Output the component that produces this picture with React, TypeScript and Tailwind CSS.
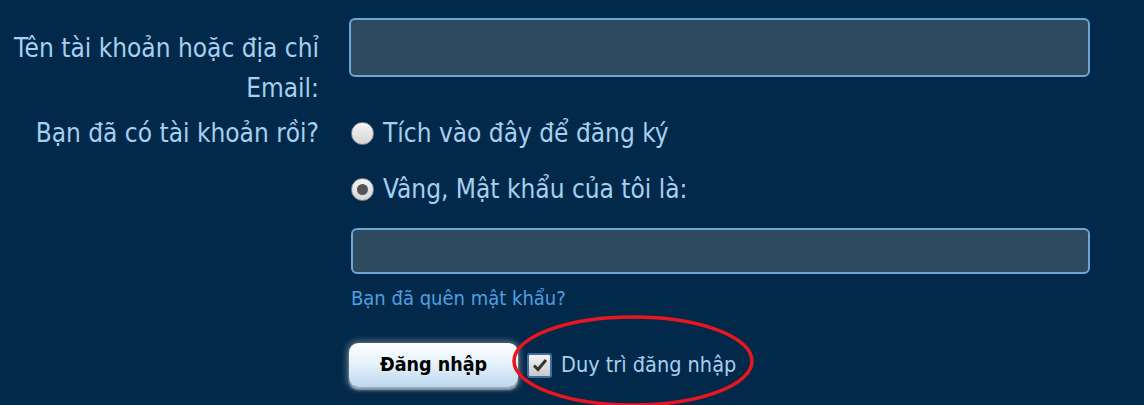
import React from 'react';

export default function App() {
  return (
    <div
      className="h-[405px] w-[1144px] overflow-hidden bg-[#03294a] text-[#a6d0ef]"
      style={{ fontFamily: '"DejaVu Sans Condensed", "DejaVu Sans", sans-serif' }}
    >
      <div className="relative pt-[18px]">
        {/* username */}
        <div className="flex">
          <label className="w-[319px] shrink-0 pt-[10px] text-right text-[26px] leading-[40px]">
            Tên tài khoản hoặc địa chỉ Email:
          </label>
          <div className="ml-[30px] w-[741px]">
            <input className="h-[59px] w-full rounded-[6px] border-2 border-[#6aa7d6] bg-[#2e4a5f] outline-none" />
          </div>
        </div>

        {/* password */}
        <div className="flex">
          <div className="w-[319px] shrink-0 pt-[5px] text-right text-[26px] leading-[40px]">Bạn đã có tài khoản rồi?</div>
          <div className="ml-[32px] w-[739px] pt-[5px]">
            <label className="flex h-[40px] items-center gap-[9px] text-[26px]">
              <span className="h-[23px] w-[23px] shrink-0 rounded-full border border-[#8c8c8c] bg-gradient-to-b from-[#f4f4f4] to-[#d6d6d6] shadow-[inset_0_1px_1px_#fff]" />
              Tích vào đây để đăng ký
            </label>
            <label className="mt-[16px] flex h-[40px] items-center gap-[9px] text-[26px]">
              <span className="flex h-[23px] w-[23px] shrink-0 items-center justify-center rounded-full border border-[#8c8c8c] bg-gradient-to-b from-[#f4f4f4] to-[#d6d6d6]">
                <span className="h-[11px] w-[11px] rounded-full bg-[#555]" />
              </span>
              Vâng, Mật khẩu của tôi là:
            </label>
            <input
              type="password"
              className="mt-[19px] h-[46px] w-full rounded-[6px] border-2 border-[#6aa7d6] bg-[#2e4a5f] outline-none"
            />
            <a className="mt-[11px] block text-[20px] leading-[26px] text-[#4fa0e0]">Bạn đã quên mật khẩu?</a>

            <div className="-ml-[2px] mt-[32px] flex items-center">
              <button className="h-[44px] w-[169px] rounded-[9px] bg-gradient-to-b from-[#ffffff] via-[#e4f0fa] to-[#bcd8ee] text-[19.5px] font-bold text-black shadow-[0_0_6px_2px_rgba(255,255,255,0.35),0_3px_2px_rgba(160,170,180,0.8)]">
                Đăng nhập
              </button>
              <label className="ml-[9px] flex items-center gap-[9px] text-[21.5px]">
                <span className="flex h-[25px] w-[25px] items-center justify-center rounded-[3px] border-2 border-[#3c6ea6] bg-gradient-to-b from-[#f4f4f4] to-[#c8c8c8]">
                  <svg width="16" height="14" viewBox="0 0 16 14">
                    <path d="M2 7.5 L6 11.5 L14 2" fill="none" stroke="#333" strokeWidth="3" />
                  </svg>
                </span>
                Duy trì đăng nhập
              </label>
            </div>
          </div>
        </div>

        {/* red annotation ellipse */}
        <svg className="pointer-events-none absolute left-[511px] top-[298px]" width="244" height="112" viewBox="0 0 244 112">
          <ellipse cx="122" cy="63" rx="119" ry="44" fill="none" stroke="#e8161e" strokeWidth="3.5" />
        </svg>
      </div>
    </div>
  );
}
